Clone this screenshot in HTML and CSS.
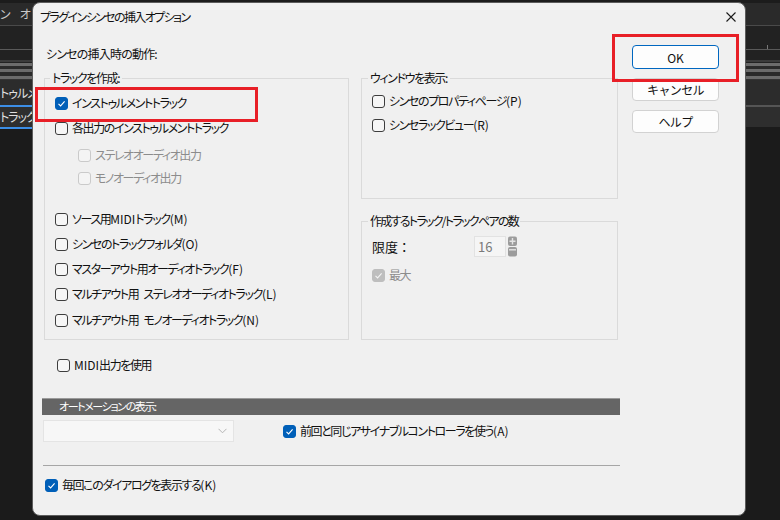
FILE: index.html
```html
<!DOCTYPE html>
<html lang="ja">
<head>
<meta charset="utf-8">
<link rel="stylesheet" href="styles.css">
</head>
<body>
<div class="desktop">
  <div class="bg">
    <div class="band b1"></div>
    <div class="band b2"><span class="bgtxt t-n">ン</span><span class="bgtxt t-o">オ</span></div>
    <div class="band b3"></div>
    <div class="band b4"><span class="tick"></span></div>
    <div class="band b5"></div>
    <div class="band b6"></div>
    <div class="band b8"><span class="bgtxt t-l">トゥルメン</span></div>
    <div class="band b9"></div>
    <div class="band b10"><span class="bgtxt t-l">トラック</span></div>
    <div class="band b11"></div>
  </div>

  <div class="dialog">
    <div class="titlebar">
      <span class="title">プラグインシンセの挿入オプション</span>
      <svg class="close" width="10" height="10" viewBox="0 0 10 10"><path d="M0.5 0.5L9.5 9.5M9.5 0.5L0.5 9.5" stroke="#1a1a1a" stroke-width="1.1" fill="none"/></svg>
    </div>
    <div class="body">
      <div class="main">
        <div class="heading">シンセの挿入時の動作<span class="lat">:</span></div>
        <div class="groups">
          <fieldset class="group g-track">
            <legend>トラックを作成<span class="lat">:</span></legend>
            <div class="rows">
              <label class="cb"><span class="box checked"><svg width="11" height="11" viewBox="0 0 11 11"><path d="M2.5 5.8L4.6 7.9L8.6 3.4" stroke="#fff" stroke-width="1.1" fill="none"/></svg></span><span>インストゥルメントトラック</span><span class="highlight hl-track"></span></label>
              <label class="cb"><span class="box"></span><span>各出力のインストゥルメントトラック</span></label>
              <label class="cb sub sub1 disabled"><span class="box"></span><span>ステレオオーディオ出力</span></label>
              <label class="cb sub sub2 disabled"><span class="box"></span><span>モノオーディオ出力</span></label>
              <label class="cb after-sub"><span class="box"></span><span>ソース用<span class="lat">MIDI</span>トラック<span class="lat">(M)</span></span></label>
              <label class="cb"><span class="box"></span><span>シンセのトラックフォルダ<span class="lat">(O)</span></span></label>
              <label class="cb"><span class="box"></span><span>マスターアウト用オーディオトラック<span class="lat">(F)</span></span></label>
              <label class="cb"><span class="box"></span><span>マルチアウト用<span class="sp"> </span>ステレオオーディオトラック<span class="lat">(L)</span></span></label>
              <label class="cb last-row"><span class="box"></span><span>マルチアウト用<span class="sp"> </span>モノオーディオトラック<span class="lat">(N)</span></span></label>
            </div>
          </fieldset>
          <div class="rightcol">
            <fieldset class="group g-window">
              <legend>ウィンドウを表示<span class="lat">:</span></legend>
              <div class="rows rows-right">
                <label class="cb"><span class="box"></span><span>シンセのプロパティページ<span class="lat">(P)</span></span></label>
                <label class="cb"><span class="box"></span><span>シンセラックビュー<span class="lat">(R)</span></span></label>
              </div>
            </fieldset>
            <fieldset class="group g-count">
              <legend class="tight">作成するトラック/トラックペアの数</legend>
              <div class="rows rows-count">
                <div class="spinrow">
                  <span class="spinlabel">限度 ：</span>
                  <span class="spin">16</span>
                  <svg class="spinbtn" width="9" height="21" viewBox="0 0 9 21">
                    <rect x="0" y="0.5" width="9" height="9.5" rx="2" fill="#9c9c9c"/>
                    <path d="M4.5 2V8.5M1.5 5.2H7.5" stroke="#e4e4e4" stroke-width="1.4"/>
                    <rect x="0" y="11" width="9" height="9.5" rx="2" fill="#9c9c9c"/>
                    <path d="M1 13.8H8" stroke="#e4e4e4" stroke-width="1.4"/>
                  </svg>
                </div>
                <label class="cb disabled max"><span class="box checked"><svg width="11" height="11" viewBox="0 0 11 11"><path d="M2.5 5.8L4.6 7.9L8.6 3.4" stroke="#f4f4f4" stroke-width="1.1" fill="none"/></svg></span><span>最大</span></label>
              </div>
            </fieldset>
          </div>
        </div>
        <label class="cb midi"><span class="box"></span><span><span class="lat">MIDI</span>出力を使用</span></label>
        <div class="sectionbar">オートメーションの表示<span class="lat">:</span></div>
        <div class="autorow">
          <div class="combo"><svg width="9" height="6" viewBox="0 0 9 6"><path d="M0.5 0.8L4.5 4.8L8.5 0.8" stroke="#b4b4b4" stroke-width="1" fill="none"/></svg></div>
          <label class="cb assign"><span class="box checked"><svg width="11" height="11" viewBox="0 0 11 11"><path d="M2.5 5.8L4.6 7.9L8.6 3.4" stroke="#fff" stroke-width="1.1" fill="none"/></svg></span><span>前回と同じアサイナブルコントローラを使う<span class="lat">(A)</span></span></label>
        </div>
        <div class="sep"></div>
        <label class="cb every"><span class="box checked"><svg width="11" height="11" viewBox="0 0 11 11"><path d="M2.5 5.8L4.6 7.9L8.6 3.4" stroke="#fff" stroke-width="1.1" fill="none"/></svg></span><span>毎回このダイアログを表示する<span class="lat">(K)</span></span></label>
      </div>
      <div class="buttons">
        <div class="okwrap">
          <button class="btn default">OK</button>
          <span class="highlight hl-ok"></span>
        </div>
        <button class="btn">キャンセル</button>
        <button class="btn">ヘルプ</button>
      </div>
    </div>
  </div>
</div>
</body>
</html>
```

FILE: styles.css
```css
* { box-sizing: border-box; }

body {
  margin: 0;
  width: 780px;
  height: 520px;
  overflow: hidden;
  background: #1b1b1b;
  font-family: "Noto Sans CJK JP", "Noto Sans", sans-serif;
  font-feature-settings: "palt";
}

.desktop {
  position: relative;
  width: 780px;
  height: 520px;
}

/* background DAW window */
.bg {
  display: flex;
  flex-direction: column;
  width: 780px;
  height: 520px;
}
.band { width: 100%; flex: none; display: flex; align-items: center; }
.b1 { height: 3px; background: #1c1c1c; }
.b2 { height: 22px; background: #2a2a2a; }
.b3 { height: 1px; background: #4a4a4a; }
.b4 { height: 24px; background: #222; justify-content: flex-end; align-items: flex-end; border-bottom: 1px solid #5a5a5a; }
.tick { width: 1px; height: 4px; background: #777; margin-right: 12px; }
.b5 { height: 10px; background: #222; }
.b6 {
  height: 20px;
  background: linear-gradient(#3a3a3a 0 2px, #222 2px 3px, #6b6b6b 3px 6px, #2a2a2a 6px 9px, #6b6b6b 9px 12px, #2a2a2a 12px 16px, #6b6b6b 16px 19px, #333 19px 20px);
}
.b8 { height: 25px; background: #2c2c2c; }
.b9 { height: 2px; background: linear-gradient(90deg, #3c8ee6 0 32px, #555 32px); }
.b10 { height: 20px; background: #2e2e2e; }
.b11 { height: 2px; background: linear-gradient(90deg, #3c8ee6 0 32px, #1b1b1b 32px); }

.bgtxt { color: #c8c8c8; font-size: 12px; line-height: 16px; white-space: nowrap; letter-spacing: -1px; }
.t-n { margin-left: 0; }
.t-o { margin-left: 10px; }
.t-l { margin-left: 0; color: #e0e0e0; }

/* dialog window */
.dialog {
  position: absolute;
  left: 32px;
  top: 2px;
  width: 714px;
  height: 514px;
  background: #f0f0f0;
  border: 1px solid #5c5c5c;
  border-radius: 8px;
  color: #111;
  font-size: 12px;
  line-height: 16px;
  letter-spacing: -1.4px;
  display: flex;
  flex-direction: column;
}

.lat { letter-spacing: 0; }
.sp { display: inline-block; width: 5px; }

.titlebar {
  height: 27px;
  display: flex;
  align-items: center;
  justify-content: space-between;
  padding: 0 9px 0 7px;
  flex: none;
}
.title { color: #111; letter-spacing: -1.6px; }

.body {
  display: flex;
  padding-left: 10px;
}

.main {
  width: 577px;
  padding-top: 16px;
  display: flex;
  flex-direction: column;
}

.heading { padding-left: 3px; letter-spacing: -0.8px; }

.groups {
  margin-top: 8px;
  margin-left: 1px;
  display: grid;
  grid-template-columns: 305px 257px;
  column-gap: 12px;
}

.group {
  margin: 0;
  padding: 0;
  min-width: 0;
  border: 1px solid #dadada;
}
.group legend {
  padding: 0 2px;
  line-height: 16px;
}
.group legend.tight { letter-spacing: -1.7px; }
.g-track { height: 270px; }
.g-track legend { margin-left: 5px; }
.rightcol { display: flex; flex-direction: column; }
.g-window { height: 129px; }
.g-count { height: 127px; margin-top: 14px; }
.g-window legend, .g-count legend { margin-left: 6px; }

.rows {
  display: flex;
  flex-direction: column;
  gap: 9px;
  padding: 9px 0 0 10px;
}
.rows-right { padding-top: 7px; gap: 8px; }
.rows-count { padding-top: 7px; gap: 10px; }

.cb {
  display: flex;
  align-items: center;
  gap: 4px;
  height: 16px;
  white-space: nowrap;
  position: relative;
}
.box {
  width: 13px;
  height: 13px;
  flex: none;
  border: 1px solid #3d3d3d;
  border-radius: 3px;
  background: #f6f6f6;
  display: flex;
  align-items: center;
  justify-content: center;
}
.box.checked {
  background: #005fb8;
  border-color: #005fb8;
}
.disabled { color: #8c8c8c; }
.disabled .box { border-color: #cacaca; background: #f4f4f4; }
.disabled .box.checked { background: #bebebe; border-color: #bebebe; }

.sub { padding-left: 23px; }
.sub1 { margin-top: 2px; }
.sub2 { margin-top: -2px; }
.after-sub { margin-top: 16px; }
.last-row { margin-top: 1px; }

.spinrow { display: flex; align-items: center; height: 21px; }
.spinlabel { width: 102px; letter-spacing: 0; font-size: 13px; }
.spin {
  width: 32px;
  height: 21px;
  border: 1px solid #e2e2e2;
  background: #f5f5f5;
  color: #7a7a7a;
  font-size: 13px;
  line-height: 19px;
  padding-left: 3px;
  letter-spacing: 0;
}
.spinbtn { margin-left: 2px; }

.midi { margin-top: 17px; padding-left: 14px; }

.sectionbar {
  margin-top: 25px;
  margin-left: -1px;
  width: 578px;
  height: 17px;
  background: #656565;
  border-top: 1px solid #9a9a9a;
  color: #fff;
  font-size: 11px;
  padding-left: 17px;
  line-height: 15px;
}

.autorow {
  margin-top: 5px;
  display: flex;
  align-items: center;
  height: 22px;
}
.combo {
  width: 191px;
  height: 22px;
  background: #f7f7f7;
  border: 1px solid #e4e4e4;
  display: flex;
  align-items: center;
  justify-content: flex-end;
  padding-right: 6px;
}
.assign { margin-left: 49px; }

.sep {
  margin-top: 23px;
  height: 1px;
  background: #a6a6a6;
}
.every { margin-top: 11px; padding-left: 2px; }

/* buttons */
.buttons {
  margin-left: 12px;
  width: 87px;
  padding-top: 15px;
  display: flex;
  flex-direction: column;
  gap: 9px;
}
.okwrap { position: relative; height: 24px; }
.btn {
  width: 87px;
  height: 23px;
  margin: 0;
  padding: 0;
  font-family: inherit;
  font-size: 12px;
  letter-spacing: -0.6px;
  color: #111;
  background: #fdfdfd;
  border: 1px solid #d2d2d2;
  border-radius: 4px;
}
.btn.default {
  height: 24px;
  border-color: #0067c0;
  letter-spacing: 0;
}

/* red annotation rectangles */
.highlight {
  position: absolute;
  border: 3px solid #e81f27;
  pointer-events: none;
}
.hl-track { left: -20px; top: -8px; width: 223px; height: 35px; }
.hl-ok { left: -20px; top: -11px; width: 127px; height: 48px; }
```
